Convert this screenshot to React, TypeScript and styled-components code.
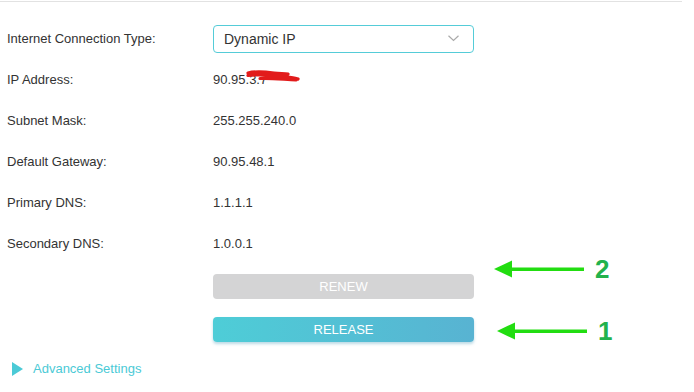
import React from "react";
import styled, { createGlobalStyle } from "styled-components";

const Global = createGlobalStyle`
  html, body { margin: 0; padding: 0; background: #fff; }
  body { font-family: "Liberation Sans", Arial, sans-serif; color: #333; }
`;

const Page = styled.div`
  position: relative;
  width: 694px;
  height: 392px;
  overflow: hidden;
`;

const TopRule = styled.div`
  width: 682px;
  height: 1px;
  border-top: 1px solid #fff;
  background: #e2e2e2;
`;

const Form = styled.div`
  display: grid;
  grid-template-columns: 206px 261px;
  grid-auto-rows: 41px;
  margin: 16px 0 0 7px;
  font-size: 13px;
`;

const Label = styled.div`
  display: flex;
  align-items: center;
  color: #333;
`;

const Value = styled.div`
  position: relative;
  display: flex;
  align-items: center;
  color: #333;
`;

const Select = styled.div`
  box-sizing: border-box;
  width: 261px;
  height: 28px;
  border: 1px solid #55ccd8;
  border-radius: 4px;
  display: flex;
  align-items: center;
  justify-content: space-between;
  padding: 0 14px 0 10px;
  color: #333;
  font-size: 14px;
`;

const Scribble = styled.svg`
  position: absolute;
  left: 33px;
  top: 11px;
`;

const Buttons = styled.div`
  display: flex;
  flex-direction: column;
  gap: 18px;
  margin: 10px 0 0 213px;
  width: 261px;
`;

const Button = styled.div<{ $primary?: boolean }>`
  height: 25px;
  border-radius: 4px;
  display: flex;
  align-items: center;
  justify-content: center;
  color: #fff;
  font-size: 13px;
  background: ${(p) =>
    p.$primary ? "linear-gradient(90deg, #4ecdd7 0%, #58b3d2 100%)" : "#d4d4d5"};
  box-shadow: ${(p) => (p.$primary ? "0 2px 3px rgba(60,150,180,0.35)" : "none")};
`;

const Advanced = styled.div`
  display: flex;
  align-items: center;
  gap: 10px;
  margin: 19px 0 0 12px;
  color: #4bcad6;
  font-size: 13px;
`;

const Note = styled.div<{ $x: number; $y: number }>`
  position: absolute;
  left: ${(p) => p.$x}px;
  top: ${(p) => p.$y}px;
  display: flex;
  align-items: center;
  gap: 11px;
`;

const Num = styled.span`
  font-family: "Liberation Sans", Arial, sans-serif;
  font-weight: bold;
  font-size: 26px;
  line-height: 1;
  color: #22b24c;
`;

const Arrow = ({ len }: { len: number }) => (
  <svg width={len} height={18} viewBox={`0 0 ${len} 18`}>
    <polygon points={`0,9 18,0.5 18,17.5`} fill="#22dd11" />
    <rect x={16} y={7.5} width={len - 16} height={3.5} fill="#22dd11" />
  </svg>
);

const rows: [string, React.ReactNode][] = [
  ["IP Address:", null],
  ["Subnet Mask:", "255.255.240.0"],
  ["Default Gateway:", "90.95.48.1"],
  ["Primary DNS:", "1.1.1.1"],
  ["Secondary DNS:", "1.0.0.1"],
];

export default function App() {
  return (
    <Page>
      <Global />
      <TopRule />
      <Form>
        <Label>Internet Connection Type:</Label>
        <Value>
          <Select>
            <span>Dynamic IP</span>
            <svg width="11" height="7" viewBox="0 0 11 7">
              <polyline points="0.5,0.8 5.5,5.5 10.5,0.8" fill="none" stroke="#aaa" strokeWidth="1.2" />
            </svg>
          </Select>
        </Value>
        {rows.map(([l, v]) => (
          <React.Fragment key={l}>
            <Label>{l}</Label>
            <Value>
              {v ?? (
                <>
                  90.95.3.7
                  <Scribble width="54" height="14" viewBox="0 0 54 14">
                    <path
                      d="M2,3 C10,1 20,2 28,3 C34,4 38,3 42,4 M2,5.5 C14,4 26,5 38,6.5 C44,7.5 50,8 52,9 M14,8.5 C26,8 38,9.5 50,10"
                      fill="none"
                      stroke="#e21b1b"
                      strokeWidth="3.2"
                      strokeLinecap="round"
                    />
                  </Scribble>
                </>
              )}
            </Value>
          </React.Fragment>
        ))}
      </Form>
      <Buttons>
        <Button>RENEW</Button>
        <Button $primary>RELEASE</Button>
      </Buttons>
      <Advanced>
        <svg width="11" height="14" viewBox="0 0 11 14">
          <polygon points="0,0 11,7 0,14" fill="#4bcad6" />
        </svg>
        <span>Advanced Settings</span>
      </Advanced>
      <Note $x={494} $y={256}>
        <Arrow len={90} />
        <Num>2</Num>
      </Note>
      <Note $x={497} $y={318}>
        <Arrow len={90} />
        <Num>1</Num>
      </Note>
    </Page>
  );
}
